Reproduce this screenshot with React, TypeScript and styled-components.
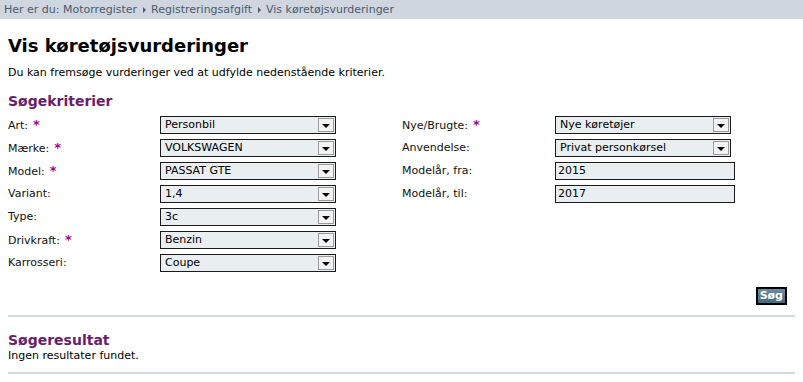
import React, {FC} from 'react';
import styled, {createGlobalStyle} from 'styled-components';

const GlobalStyle = createGlobalStyle`
  body {
    margin: 0;
    background: #ffffff;
    font-family: "DejaVu Sans", Verdana, sans-serif;
    font-size: 11px;
    color: #000000;
  }
`;

const Crumbs = styled.div`
  display: flex;
  align-items: center;
  height: 19px;
  padding-left: 4px;
  background: #cfd6df;
  color: #4b5b6b;
  font-size: 11px;
`;

const CrumbArrow = styled.span`
  display: inline-block;
  width: 0;
  height: 0;
  margin: 0 5px 0 6px;
  border-top: 3px solid transparent;
  border-bottom: 3px solid transparent;
  border-left: 3px solid #4b5b6b;
`;

const Main = styled.div`
  padding: 0 8px;
`;

const Title = styled.h1`
  margin: 15px 0 0;
  font-size: 18px;
  line-height: 24px;
  font-weight: bold;
`;

const Intro = styled.p`
  margin: 8px 0 0;
  line-height: 14px;
`;

const Heading = styled.h2`
  margin: ${p => (p.$top ? p.$top : 0)}px 0 0;
  font-size: 14px;
  line-height: 18px;
  font-weight: bold;
  color: #6b1d6b;
`;

const Columns = styled.div`
  display: grid;
  grid-template-columns: 394px 1fr;
  margin-top: 6px;
`;

const Row = styled.div`
  display: grid;
  grid-template-columns: ${p => p.$label}px auto;
  height: 23px;
  align-items: start;
`;

const Label = styled.span`
  line-height: 18px;
  color: #111;
`;

const Star = styled.span`
  margin-left: 5px;
  font-size: 13px;
  font-weight: bold;
  color: #a1008c;
`;

const Select = styled.div`
  display: flex;
  align-items: center;
  width: ${p => p.$w}px;
  height: 18px;
  box-sizing: border-box;
  border: 1px solid #1b1b1b;
  background: #e9eef1;
  font-size: 11px;
`;

const SelectText = styled.span`
  flex: 1;
  padding-left: 4px;
  line-height: 16px;
  white-space: nowrap;
  overflow: hidden;
`;

const ArrowBox = styled.span`
  display: flex;
  align-items: center;
  justify-content: center;
  width: 14px;
  height: 12px;
  margin-right: 1px;
  border: 1px solid #9a9a9a;
  background: #f3f3f3;
`;

const Arrow = styled.span`
  width: 0;
  height: 0;
  margin-top: 1px;
  border-left: 4px solid transparent;
  border-right: 4px solid transparent;
  border-top: 4px solid #000;
`;

const TextField = styled.div`
  width: 180px;
  height: 18px;
  box-sizing: border-box;
  border: 1px solid #1b1b1b;
  background: #e9eef1;
  padding-left: 2px;
  line-height: 16px;
`;

const Actions = styled.div`
  display: flex;
  justify-content: flex-end;
  padding: 10px 8px 0 0;
`;

const Button = styled.button`
  height: 18px;
  padding: 0 2px;
  border: 2px solid #000;
  background: linear-gradient(#6b8fa0, #46697a);
  color: #fff;
  font-family: "DejaVu Sans", Verdana, sans-serif;
  font-size: 11px;
  font-weight: bold;
  line-height: 14px;
`;

const Rule = styled.hr`
  margin: ${p => p.$top}px 0 0;
  border: 0;
  border-top: 2px solid #d2d9e0;
`;

const Empty = styled.p`
  margin: 0;
  line-height: 14px;
`;

type Field = { label: string; value: string; required?: boolean; text?: boolean };

const left: Field[] = [
    {label: 'Art:', value: 'Personbil', required: true},
    {label: 'Mærke:', value: 'VOLKSWAGEN', required: true},
    {label: 'Model:', value: 'PASSAT GTE', required: true},
    {label: 'Variant:', value: '1,4'},
    {label: 'Type:', value: '3c'},
    {label: 'Drivkraft:', value: 'Benzin', required: true},
    {label: 'Karrosseri:', value: 'Coupe'},
];

const right: Field[] = [
    {label: 'Nye/Brugte:', value: 'Nye køretøjer', required: true},
    {label: 'Anvendelse:', value: 'Privat personkørsel'},
    {label: 'Modelår, fra:', value: '2015', text: true},
    {label: 'Modelår, til:', value: '2017', text: true},
];

const FieldRow: FC<{ field: Field; labelWidth: number; width: number }> = ({field, labelWidth, width}) => (
    <Row $label={labelWidth}>
        <Label>
            {field.label}
            {field.required ? <Star>*</Star> : null}
        </Label>
        {field.text ?
            <TextField>{field.value}</TextField>
            :
            <Select $w={width}>
                <SelectText>{field.value}</SelectText>
                <ArrowBox><Arrow/></ArrowBox>
            </Select>
        }
    </Row>
);

const App: FC = () => {
    return <>
        <GlobalStyle/>
        <Crumbs>
            Her er du: Motorregister<CrumbArrow/>Registreringsafgift<CrumbArrow/>Vis køretøjsvurderinger
        </Crumbs>
        <Main>
            <Title>Vis køretøjsvurderinger</Title>
            <Intro>Du kan fremsøge vurderinger ved at udfylde nedenstående kriterier.</Intro>
            <Heading $top={12}>Søgekriterier</Heading>
            <Columns>
                <div>
                    {left.map(f => <FieldRow key={f.label} field={f} labelWidth={152} width={176}/>)}
                </div>
                <div>
                    {right.map(f => <FieldRow key={f.label} field={f} labelWidth={153} width={176}/>)}
                </div>
            </Columns>
            <Actions>
                <Button type="button">Søg</Button>
            </Actions>
            <Rule $top={10}/>
            <Heading $top={14}>Søgeresultat</Heading>
            <Empty>Ingen resultater fundet.</Empty>
            <Rule $top={9}/>
        </Main>
    </>;
};

export default App;
